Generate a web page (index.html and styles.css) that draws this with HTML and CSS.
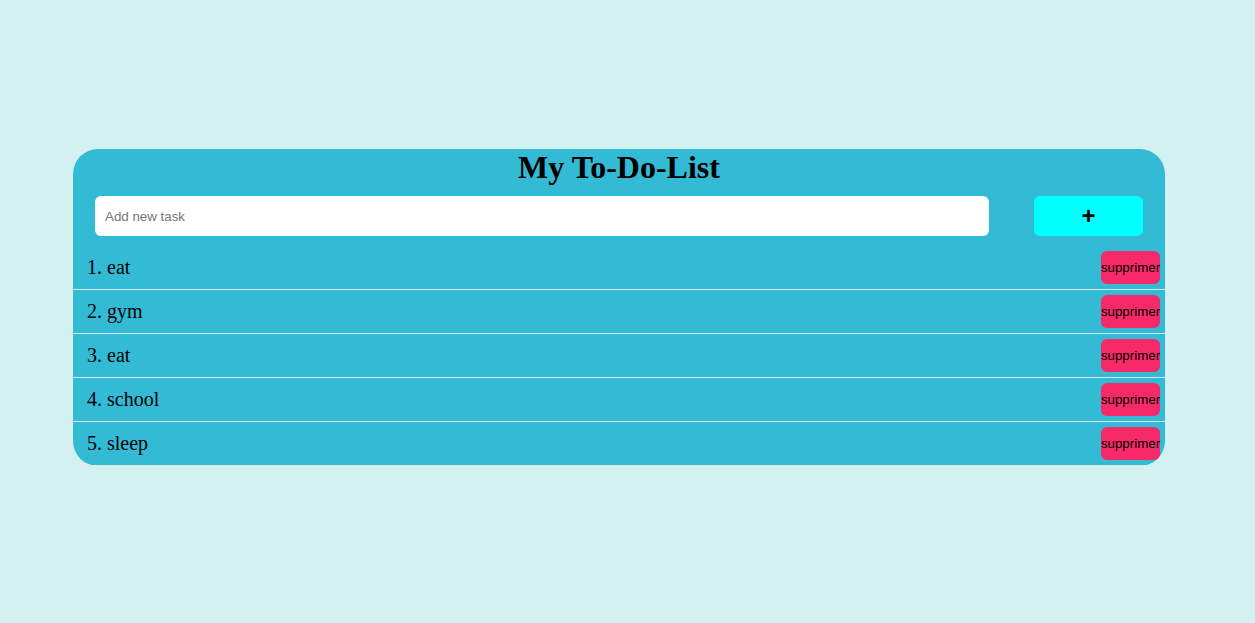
FILE: index.html
```html
<!DOCTYPE html>
<html>
<head>
<meta charset="utf-8">
<link rel="stylesheet" href="styles.css">
</head>
<body>
<div class="card">
  <h1 class="title">My To-Do-List</h1>
  <div class="add-row">
    <input class="task-input" type="text" placeholder="Add new task">
    <button class="add-btn">+</button>
  </div>
  <ul class="tasks">
    <li class="task"><span class="task-text">1. eat</span><button class="del-btn">supprimer</button></li>
    <li class="task"><span class="task-text">2. gym</span><button class="del-btn">supprimer</button></li>
    <li class="task"><span class="task-text">3. eat</span><button class="del-btn">supprimer</button></li>
    <li class="task"><span class="task-text">4. school</span><button class="del-btn">supprimer</button></li>
    <li class="task"><span class="task-text">5. sleep</span><button class="del-btn">supprimer</button></li>
  </ul>
</div>
</body>
</html>
```
FILE: styles.css
```css
html, body {
  margin: 0;
  padding: 0;
}
body {
  background: #d2f1f0;
  font-family: "Liberation Serif", "Times New Roman", serif;
  padding-top: 149px;
  height: 623px;
  box-sizing: border-box;
}
.card {
  width: 1092px;
  margin-left: 73px;
  background: #33bad4;
  border-radius: 25px;
}
.title {
  margin: 0;
  font-size: 32px;
  font-weight: bold;
  text-align: center;
  line-height: 37px;
  color: #000;
}
.add-row {
  display: flex;
  align-items: center;
  padding: 10px 22px 0 22px;
  gap: 45px;
}
.task-input {
  flex: 1;
  height: 40px;
  box-sizing: border-box;
  border: none;
  border-radius: 6px;
  padding: 0 10px;
  font-family: "Liberation Sans", Arial, sans-serif;
  font-size: 13.33px;
  background: #fff;
  outline: none;
}
.task-input::placeholder {
  color: #757575;
}
.add-btn {
  width: 109px;
  height: 40px;
  border: none;
  border-radius: 6px;
  background: #00ffff;
  font-family: "Liberation Sans", Arial, sans-serif;
  font-size: 24px;
  font-weight: bold;
  color: #000;
  padding: 0;
  line-height: 1;
}
.tasks {
  list-style: none;
  margin: 10px 0 0 0;
  padding: 0;
}
.task {
  display: flex;
  align-items: center;
  justify-content: space-between;
  height: 44px;
  box-sizing: border-box;
  border-bottom: 1px solid #dde9ec;
  padding: 0 5px 0 14px;
}
.task-text {
  font-size: 20px;
  color: #000;
}
.del-btn {
  width: 59px;
  height: 33px;
  padding: 0;
  border: none;
  border-radius: 6px;
  background: #f62a68;
  color: #000;
  font-family: "Liberation Sans", Arial, sans-serif;
  font-size: 13.33px;
  white-space: nowrap;
  overflow: visible;
  display: flex;
  justify-content: center;
  align-items: center;
}
```
